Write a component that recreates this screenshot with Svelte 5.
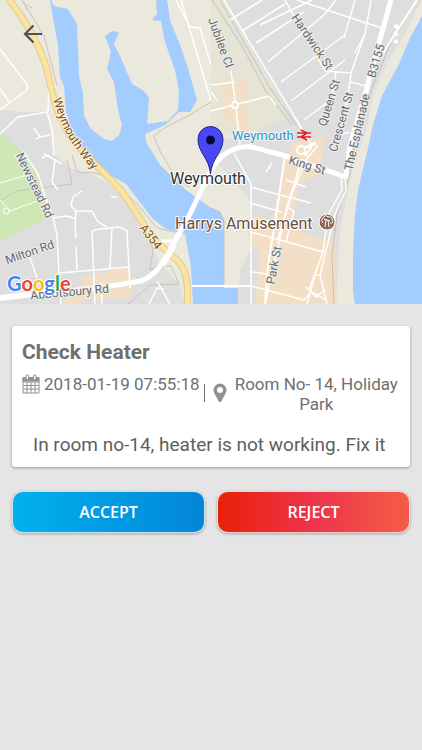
<script>
    const task = {
        title: 'Check Heater',
        date: '2018-01-19 07:55:18',
        location: 'Room No- 14, Holiday Park',
        description: 'In room no-14, heater is not working. Fix it'
    }

    let status = $state('pending')

    const streets = [
        // west side
        'M0 49 L28 86 L27 90 L8 104 L0 110 M0 89 L9 102',
        'M0 134 L18 117 L36 114 L47 112 L52 130 L54 155',
        'M48 112 L49 87 L57 86',
        'M34 128 L40 137 L50 135 M40 137 L36 139',
        'M44 154 L55 160 L62 164 M55 160 L52 182 L58 190 M42 158 L49 155',
        'M23 151 L38 174 L43 190 L53 217 L57 235 L59 274 L61 304',
        'M53 218 L67 216 L76 219 M82 191 L73 197 L71 206 L76 211 L92 211 L98 222 L107 227',
        'M76 211 L75 225 L76 238 M76 247 L77 270',
        'M92 231 L100 229 L120 227 L127 231 L130 288 M92 231 L95 304 M112 228 L110 268',
        'M59 273 L130 267 M30 258 L37 278 M101 283 L102 304 M111 197 L118 197',
        'M149 304 L157 288 L164 289 M157 281 L170 304',
        // rail corner and hardwick grid
        'M224 0 L311 144 M230 20 L262 0 M242 31 L285 4 M260 25 L312 0',
        'M256 43 L304 12 M268 62 L325 14 L336 0 M281 82 L345 35 M291 101 L345 60',
        'M304 120 L336 96 M285 0 L325 71 L351 73 L365 34 L371 0',
        'M297 0 L363 22 L382 28 M355 0 L344 38 M336 72 L332 94',
        'M351 73 L350 82 L366 86 M350 82 L342 125 M349 132 L334 137 M355 53 L365 34',
        'M176 0 L190 27 L200 28 L211 65 M181 0 L211 101 M211 85 L235 82 M211 92 L217 100 M211 111 L269 96 L276 105',
        'M231 71 L235 100 L240 145',
        // centre
        'M234 153 L251 184 L251 304 M250 187 L311 203 M250 203 L282 212',
        'M272 163 L266 172 M318 145 L306 160 L288 203 L274 264 L265 304',
        'M286 180 L306 187 M286 207 L294 211 L286 242 M251 232 L323 252',
        'M251 272 L268 274 M251 286 L304 300 L311 292 L327 300',
        'M341 176 L342 190 L328 215 L323 252 L309 290 M345 175 L346 190 L335 214 L320 275 L327 304',
        'M307 304 L315 275 L320 275 M306 287 L316 297 L325 290'
    ]

    const paths = [
        'M22 0 L28 11 L26 6 M24 3 L32 8 M29 11 L44 36 L52 66 L57 86',
        'M211 102 L188 116 L166 127 L154 136 L160 151 L175 177 L189 187',
        'M72 155 L77 172 L96 173 L109 177 L138 205 L157 228 L174 232 L181 231',
        'M211 208 L220 212 L224 220 L224 287',
        'M0 201 L17 191 L72 184 L67 160 M148 230 L153 250 L150 270 L157 266 L171 266 L179 284 L150 285 L128 304'
    ]
</script>

<main class="screen">
    <header class="map">
        <svg class="tiles" viewBox="0 0 422 304" role="img" aria-label="Map of Weymouth">
            <rect width="422" height="304" fill="#ebe8dd" />

            <!-- built-up areas -->
            <path fill="#dedede" d="M0 109 Q20 114 48 111 L55 155 L70 168 L90 174 L109 184 L135 210 L148 232 L153 252 L164 268 L179 284 L185 304 L0 304Z" />
            <path fill="#dedede" d="M224 0 L422 0 L407 30 L386 65 L374 93 L365 135 L353 165 L340 230 L336 304 L238 304 L240 270 L250 250 L250 200 L220 166 L211 140 L248 137 L281 117 L268 90 Z" />
            <path fill="#cde7b5" d="M0 132 L22 152 L39 180 L48 218 L0 241Z" />
            <path fill="#e5e4d5" d="M211 0 L224 0 L291 117 L240 137 L211 130Z" />
            <g fill="#f2dfc5">
                <path d="M220 84 L247 78 L246 110 L250 136 L225 118Z" />
                <path d="M293 142 L325 138 L320 175 L300 182 L291 225 L310 236 L334 242 L337 304 L255 304 L260 250 L248 240 L249 215 L272 220 L285 160Z" />
                <path d="M82 277 L130 267 L132 297 L82 300Z M65 298 L80 294 L82 304 L64 304Z" />
            </g>

            <!-- water -->
            <g fill="#a3ccff">
                <path d="M50 0 L55 29 L58 45 L60 77 L64 86 L66 112 L72 132 L86 151 L110 175 L126 184 L140 202 L153 219 L166 229 L185 234 L191 267 L193 304 L238 304 L238 288 L224 288 L224 220 L220 212 L211 208 L186 190 L160 165 L146 142 L145 134 L165 125 L179 112 L190 112 L197 100 L187 65 L180 45 L170 20 L167 0 L156 0 L157 14 L152 20 L161 21 L165 42 L175 70 L179 91 L178 110 L168 121 L147 124 L149 98 L144 91 L132 84 L120 56 L114 44 L119 32 L112 31 L105 36 L111 52 L107 69 L114 82 L118 110 L122 125 L119 135 L112 141 L104 139 L91 129 L84 116 L83 94 L79 76 L77 24 L68 9 L54 6 L51 0Z" />
                <path d="M422 16 L410 38 L399 64 L382 96 L373 125 L366 157 L358 190 L355 215 L353 255 L353 291 L355 304 L422 304Z" />
            </g>

            <!-- footpaths, beach edge -->
            {#each paths as d}
                <path {d} fill="none" stroke="#c9c5b4" stroke-width="1" />
            {/each}
            <path d="M417 0 L391 42 L372 88 L355 145 L349 177 L337 215 L332 255 L334 304" fill="none" stroke="#c4c0b0" stroke-width="1" />
            <path d="M212 0 L242 46 L266 91 L292 125 M220 0 L270 88 L297 126" fill="none" stroke="#cfcfca" stroke-width="1.5" />

            {#each streets as d}
                <path {d} fill="none" stroke="#fff" stroke-width="1.5" stroke-linejoin="round" />
            {/each}
            <g fill="none" stroke="#fff">
                <path d="M391 0 L382 32 L371 72 L367 88 L350 145 L346 176 L340 176" stroke-width="5" />
                <path d="M211 170 Q226 145 252 147 L282 155 L340 175" stroke-width="5" />
                <path d="M211 170 L188 218 L164 260 Q155 276 141 281 L105 287 L0 298" stroke-width="5" />
                <path d="M0 298 L65 290" stroke-width="6" />
                <path d="M160 241 L176 241 M316 143 L300 150 L307 155" stroke-width="3" />
                <path d="M192 286 L251 286 M382 55 L395 34 L417 0" stroke-width="2" />
                <path d="M285 155 L277 210 L268 265 L265 304 M300 165 L278 240 M314 143 L306 155" stroke-width="2" />
                <circle cx="235" cy="105" r="3" stroke-width="2" fill="#f2dfc5" />
                <circle cx="301" cy="150" r="4" stroke-width="2" fill="#f2dfc5" />
                <circle cx="6" cy="211" r="3" stroke-width="1" />
                <path d="M0 183 L30 174 M0 200 L10 211 L40 200 M14 155 L22 165" stroke-width="1" />
            </g>

            <!-- A354 -->
            <path d="M8 -2 C24 18 38 42 46 66 C54 100 57 116 72 139 C90 161 108 175 123 193 C141 219 151 240 176 259 C187 269 189 285 187 306" fill="none" stroke="#dfcd93" stroke-width="7" />
            <path d="M8 -2 C24 18 38 42 46 66 C54 100 57 116 72 139 C90 161 108 175 123 193 C141 219 151 240 176 259 C187 269 189 285 187 306" fill="none" stroke="#fce39f" stroke-width="5" />
            <path d="M174 245 L162 265" stroke="#fff" stroke-width="6" />

            <g class="street" text-anchor="middle">
                <text transform="translate(31 187) rotate(64)">Newstead Rd</text>
                <text transform="translate(31 256) rotate(-19)">Milton Rd</text>
                <text transform="translate(70 296) rotate(-5)">Abbotsbury Rd</text>
                <text transform="translate(217 44) rotate(70)">Jubilee Cl</text>
                <text transform="translate(309 44) rotate(56)">Hardwick St</text>
                <text transform="translate(333 104) rotate(-73)">Queen St</text>
                <text transform="translate(345 123) rotate(-74)">Crescent St</text>
                <text transform="translate(361 133) rotate(-77)">The Esplanade</text>
                <text transform="translate(380 62) rotate(-73)">B3155</text>
                <text transform="translate(306 169) rotate(17)">King St</text>
                <text transform="translate(278 266) rotate(-79)">Park St</text>
            </g>

            <path id="weymouth-way" d="M53 99 C61 123 64 138 98 176" fill="none" />
            <g class="street major">
                <text><textPath href="#weymouth-way">Weymouth Way</textPath></text>
                <text transform="translate(139 228) rotate(52)">A354</text>
            </g>

            <text class="station" x="232" y="140">Weymouth</text>
            <path d="M297 133 H311 M297 137 H311 M301 130 L307 133 L301 137 L307 140" fill="none" stroke="#e3202f" stroke-width="1.6" />

            <text class="place" x="170" y="184">Weymouth</text>
            <text class="place poi" x="175" y="229">Harrys Amusement</text>
            <circle cx="327" cy="222" r="8" fill="#8d6755" stroke="#fff" />
            <path d="M323 223 Q320 220 323 218 Q325 214 328 217 Q333 216 332 220 Q334 224 330 223 M325 227 L326 220 M329 227 L328 220 M324 219 L330 221" fill="none" stroke="#fff" stroke-width="1" />

            <text class="google" x="7" y="291"><tspan fill="#4285f4">G</tspan><tspan fill="#ea4335">o</tspan><tspan fill="#fbbc05">o</tspan><tspan fill="#4285f4">g</tspan><tspan fill="#34a853">l</tspan><tspan fill="#ea4335">e</tspan></text>

            <!-- marker -->
            <path d="M210.500 174 C209 157 198 153 198 139 A12.500 12.500 0 0 1 223 139 C223 153 212 157 210.500 174Z" fill="#4947f5" stroke="#21208e" />
            <circle cx="210.500" cy="140" r="4.500" fill="#08083b" />
        </svg>

        <nav class="toolbar">
            <button class="icon" aria-label="Back">
                <svg viewBox="0 0 24 24" width="24" height="24">
                    <path d="M22 12 H5 M13.500 3.500 L5 12 L13.500 20.500" fill="none" stroke="#4e5059" stroke-width="2.200" />
                </svg>
            </button>
            <button class="icon" aria-label="More options">
                <svg viewBox="0 0 24 24" width="24" height="24" fill="#fff">
                    <circle cx="12" cy="4.500" r="2.200" />
                    <circle cx="12" cy="12" r="2.200" />
                    <circle cx="12" cy="19.500" r="2.200" />
                </svg>
            </button>
        </nav>
    </header>

    <section class="content">
        <article class="card">
            <h1>{task.title}</h1>
            <div class="meta">
                <svg class="calendar" viewBox="0 0 18 20" width="18" height="20" fill="none" stroke="#929292">
                    <path d="M1 4 H17 V19 H1Z M1 8 H17 M1 11.500 H17 M1 15 H17 M5 8 V19 M9 8 V19 M13 8 V19" />
                    <path d="M1 3.500 H17 V7 H1Z" fill="#929292" />
                    <rect x="4" y="1" width="2.500" height="4.500" rx="1" fill="#fff" />
                    <rect x="11.500" y="1" width="2.500" height="4.500" rx="1" fill="#fff" />
                </svg>
                <time datetime="2018-01-19T07:55:18">{task.date}</time>
                <span class="divider"></span>
                <svg class="pin" viewBox="0 0 14 20" width="14" height="20">
                    <path d="M7 0.500 A6.500 6.500 0 0 0 0.500 7 C0.500 10 3 13 5.500 18 Q7 20.500 8.500 18 C11 13 13.500 10 13.500 7 A6.500 6.500 0 0 0 7 0.500Z M7 4 A3 3 0 1 1 7 10 A3 3 0 1 1 7 4Z" fill="#929292" fill-rule="evenodd" />
                </svg>
                <address>{task.location}</address>
            </div>
            <p>{task.description}</p>
        </article>

        <div class="actions">
            <button class="accept" onclick={() => (status = 'accepted')} disabled={status !== 'pending'}>ACCEPT</button>
            <button class="reject" onclick={() => (status = 'rejected')} disabled={status !== 'pending'}>REJECT</button>
        </div>
    </section>
</main>

<style>
    :global(body) {
        background: #e5e5e5;
    }

    .screen {
        font-family: Roboto, sans-serif;
        color: #707070;
    }

    .map {
        position: relative;
    }

    .tiles {
        display: block;
        width: 100%;
        height: auto;
    }

    .tiles text {
        paint-order: stroke;
        stroke-linejoin: round;
    }

    .street {
        font-size: 12px;
        fill: #68696b;
        stroke: #eee;
        stroke-width: 2px;
    }

    .major {
        fill: #70502c;
        stroke: #fff3d3;
    }

    .station {
        font-size: 13px;
        fill: #3393c5;
        stroke: #f4f4f4;
        stroke-width: 2px;
    }

    .place {
        font-size: 16px;
        fill: #303030;
        stroke: #fff;
        stroke-width: 2px;
    }

    .poi {
        fill: #6b4d42;
    }

    .google {
        font-family: Lato, sans-serif;
        font-size: 20px;
        font-weight: 700;
        stroke: #fff;
        stroke-width: 2px;
    }

    /* sits on top of the map */
    .toolbar {
        position: absolute;
        inset: 0 0 auto;
        display: flex;
        justify-content: space-between;
        padding: 22px 14px 0 20px;
    }

    button {
        border: 0;
        cursor: pointer;
    }

    .icon {
        display: flex;
        padding: 0;
        background: none;
    }

    .content {
        padding: 22px 12px;
    }

    .card {
        padding: 12px 8px 10px 10px;
        border-radius: 3px;
        background: #fff;
        box-shadow: 0 1px 3px rgba(0, 0, 0, 0.35);
    }

    h1 {
        margin: 0;
        font-size: 21px;
        line-height: 28px;
        font-weight: 700;
    }

    .meta {
        display: flex;
        align-items: flex-start;
        padding-top: 8px;
        font-size: 17px;
        line-height: 20px;
    }

    .meta svg {
        flex: none;
    }

    time {
        padding-left: 4px;
        white-space: nowrap;
    }

    .divider {
        flex: none;
        width: 1px;
        height: 18px;
        margin: 10px 8px 0 4px;
        background: #707070;
    }

    .pin {
        margin-top: 9px;
    }

    address {
        flex: 1;
        padding: 0 0 0 4px;
        font-style: normal;
        text-align: center;
    }

    p {
        margin: 0;
        padding: 18px 0 0 11px;
        font-size: 19px;
        line-height: 25px;
        color: #606060;
    }

    .actions {
        display: grid;
        grid-template-columns: 1fr 1fr;
        gap: 12px;
        padding-top: 24px;
    }

    .actions button {
        height: 42px;
        border: 1px solid #cfe2f0;
        border-radius: 11px;
        font-family: 'Open Sans', sans-serif;
        font-size: 16px;
        font-weight: 600;
        color: #fff;
        box-shadow: 0 1px 3px rgba(0, 0, 0, 0.3);
    }

    .accept {
        background: linear-gradient(to right, #00b1ef, #0386d8);
    }

    .actions .reject {
        border-color: #f3d4d4;
        background: linear-gradient(to right, #e92008, #ed344c 50%, #f55c45);
    }
</style>
